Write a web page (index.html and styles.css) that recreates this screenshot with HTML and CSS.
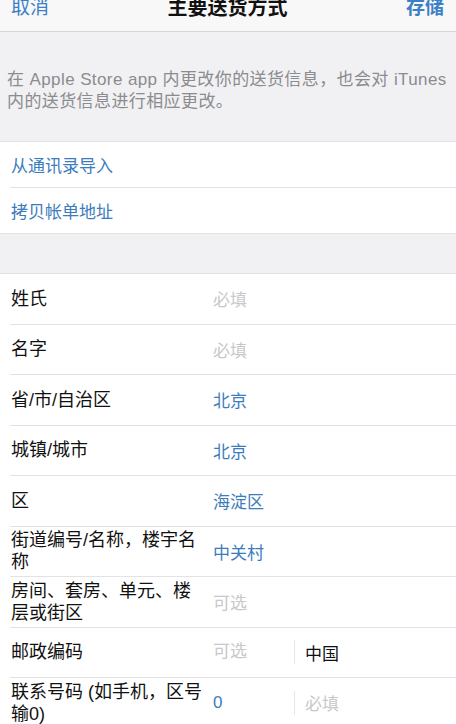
FILE: index.html
```html
<!DOCTYPE html>
<html>
<head>
    <title>主要送货方式</title>
    <link rel="stylesheet" href="styles.css">
</head>
<body>
    <div class="navbar">
        <span class="nav-btn">取消</span>
        <span class="nav-title">主要送货方式</span>
        <span class="nav-btn save">存储</span>
    </div>

    <div class="note">在 Apple Store app 内更改你的送货信息，也会对 iTunes 内的送货信息进行相应更改。</div>

    <div class="group">
        <div class="link-row">从通讯录导入</div>
        <div class="link-row">拷贝帐单地址</div>
    </div>

    <div class="group form">
        <div class="row">
            <div class="label">姓氏</div>
            <div class="value placeholder">必填</div>
        </div>
        <div class="row">
            <div class="label">名字</div>
            <div class="value placeholder">必填</div>
        </div>
        <div class="row">
            <div class="label">省/市/自治区</div>
            <div class="value blue">北京</div>
        </div>
        <div class="row">
            <div class="label">城镇/城市</div>
            <div class="value blue">北京</div>
        </div>
        <div class="row">
            <div class="label">区</div>
            <div class="value blue">海淀区</div>
        </div>
        <div class="row">
            <div class="label">街道编号/名称，楼宇名称</div>
            <div class="value blue">中关村</div>
        </div>
        <div class="row">
            <div class="label">房间、套房、单元、楼层或街区</div>
            <div class="value placeholder">可选</div>
        </div>
        <div class="row">
            <div class="label">邮政编码</div>
            <div class="value short placeholder">可选</div>
            <div class="split">中国</div>
        </div>
        <div class="row">
            <div class="label">联系号码 (如手机，区号输0)</div>
            <div class="value short blue">0</div>
            <div class="split placeholder">必填</div>
        </div>
    </div>
</body>
</html>
```

FILE: styles.css
```css
body {
    margin: 0;
    overflow: hidden;
    background: #f1f1f3;
    font-family: 'Liberation Sans', 'Noto Sans CJK SC', sans-serif;
    color: #111;
}
.navbar {
    display: flex;
    justify-content: space-between;
    align-items: flex-start;
    height: 32px;
    padding: 0 12px 0 11px;
    background: #f8f8f8;
    border-bottom: 1px solid #d6d6d8;
    box-sizing: border-box;
}
.nav-btn {
    color: #3b80c6;
    font-size: 19px;
    line-height: 16px;
}
.nav-btn.save {
    font-weight: bold;
}
.nav-title {
    font-size: 20px;
    line-height: 16px;
    font-weight: bold;
}
.note {
    padding: 37px 4px 0 7px;
    height: 109px;
    box-sizing: border-box;
    font-size: 17px;
    letter-spacing: 0.4px;
    line-height: 22px;
    color: #8b8b90;
}
.group {
    background: #fff;
    border-top: 1px solid #e3e3e5;
    border-bottom: 1px solid #e3e3e5;
}
.link-row {
    height: 45px;
    display: flex;
    align-items: center;
    padding-left: 11px;
    font-size: 17px;
    color: #3b7cbc;
}
.link-row:first-child {
    border-bottom: 1px solid #e3e3e5;
    margin-left: 10px;
    padding-left: 1px;
}
.form {
    margin-top: 39px;
    border-bottom: none;
}
.row {
    display: flex;
    align-items: center;
    height: 50.5px;
    margin-left: 10px;
    border-bottom: 1px solid #e3e3e5;
    box-sizing: border-box;
    font-size: 18px;
}
.label {
    width: 195px;
    padding-left: 1px;
    margin-right: 7px;
    line-height: 22px;
    flex-shrink: 0;
}
.value {
    flex: 1;
    font-size: 17px;
}
.value.short {
    flex: 0 0 81px;
    height: 24px;
    line-height: 24px;
    border-right: 1px solid #e6e6e8;
}
.split {
    padding-left: 10px;
    font-size: 17px;
}
.placeholder {
    color: #c8c8cc;
}
.blue {
    color: #3b7cbc;
}
```
